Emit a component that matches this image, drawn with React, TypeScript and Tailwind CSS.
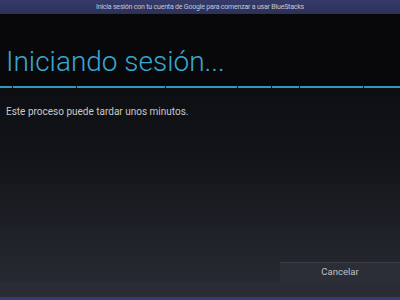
import React from "react";

const segs = [
  { w: 12 }, { w: 63 }, { w: 88 }, { w: 70 }, { w: 33 }, { w: 27 }, { w: 63 }, { w: 36 },
];

export default function App() {
  return (
    <div
      className="w-[400px] h-[300px] flex flex-col overflow-hidden bg-[#0a0a0d]"
      style={{ fontFamily: "Roboto, 'Noto Sans', sans-serif" }}
    >
      <div className="h-[14px] shrink-0 bg-gradient-to-b from-[#353a68] to-[#2c3158] flex items-center justify-center">
        <span className="text-[7px] leading-none text-[#c4c7dc] tracking-[-0.2px]">
          Inicia sesión con tu cuenta de Google para comenzar a usar BlueStacks
        </span>
      </div>
      <div className="flex-1 flex flex-col bg-gradient-to-b from-[#09090c] via-[#121419] to-[#2a2d35]">
        <div className="h-[72px] shrink-0 flex items-end pl-[6px] bg-[#08080b]">
          <span className="text-[28px] font-light leading-none text-[#37a8d3] pb-[10px]">Iniciando sesión...</span>
        </div>
        <div className="flex h-[2px] gap-[1px] shrink-0">
          {segs.map((s, i) => (
            <div key={i} className="h-[2px] bg-[#2f98bd]" style={{ flexGrow: s.w, flexBasis: 0 }} />
          ))}
        </div>
        <div className="pl-[6px] pt-[19px] text-[10px] leading-none text-[#c9c9c9]">
          Este proceso puede tardar unos minutos.
        </div>
        <div className="flex-1" />
        <div className="flex justify-end">
          <div className="w-[120px] h-[20px] border-t border-[#3a3d45] bg-[#2b2e36] flex items-center justify-center text-[9.5px] text-[#bfc1c6]">
            Cancelar
          </div>
        </div>
        <div className="h-[15px] bg-[#292c34]" />
        <div className="h-[3px] bg-[#363c72]" />
      </div>
    </div>
  );
}
